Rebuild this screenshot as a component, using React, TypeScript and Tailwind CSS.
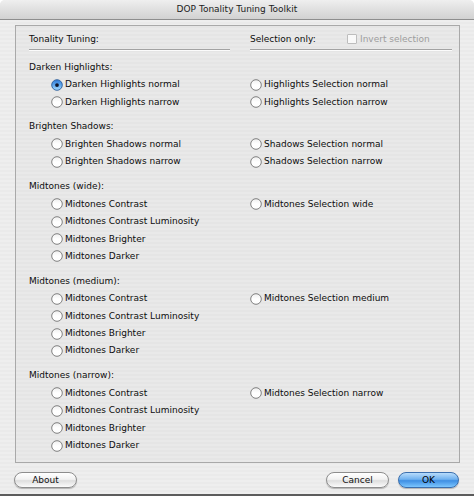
import React from 'react';

type Row = { left: string; right?: string; checked?: boolean };
type Group = { title: string; rows: Row[] };

const groups: Group[] = [
    {
        title: 'Darken Highlights:',
        rows: [
            { left: 'Darken Highlights normal', right: 'Highlights Selection normal', checked: true },
            { left: 'Darken Highlights narrow', right: 'Highlights Selection narrow' },
        ],
    },
    {
        title: 'Brighten Shadows:',
        rows: [
            { left: 'Brighten Shadows normal', right: 'Shadows Selection normal' },
            { left: 'Brighten Shadows narrow', right: 'Shadows Selection narrow' },
        ],
    },
    {
        title: 'Midtones (wide):',
        rows: [
            { left: 'Midtones Contrast', right: 'Midtones Selection wide' },
            { left: 'Midtones Contrast Luminosity' },
            { left: 'Midtones Brighter' },
            { left: 'Midtones Darker' },
        ],
    },
    {
        title: 'Midtones (medium):',
        rows: [
            { left: 'Midtones Contrast', right: 'Midtones Selection medium' },
            { left: 'Midtones Contrast Luminosity' },
            { left: 'Midtones Brighter' },
            { left: 'Midtones Darker' },
        ],
    },
    {
        title: 'Midtones (narrow):',
        rows: [
            { left: 'Midtones Contrast', right: 'Midtones Selection narrow' },
            { left: 'Midtones Contrast Luminosity' },
            { left: 'Midtones Brighter' },
            { left: 'Midtones Darker' },
        ],
    },
];

function Radio({ checked = false }: { checked?: boolean }) {
    return (
        <svg width="12" height="12" viewBox="0 0 12 12" className="shrink-0">
            <defs>
                <linearGradient id="radio-off" x1="0" y1="0" x2="0" y2="1">
                    <stop offset="0" stopColor="#eeeeee" />
                    <stop offset="0.5" stopColor="#ffffff" />
                    <stop offset="1" stopColor="#fdfdfd" />
                </linearGradient>
                <linearGradient id="radio-on" x1="0" y1="0" x2="0" y2="1">
                    <stop offset="0" stopColor="#2f79d6" />
                    <stop offset="0.5" stopColor="#5fa7ee" />
                    <stop offset="1" stopColor="#a8dcff" />
                </linearGradient>
            </defs>
            <circle
                cx="6"
                cy="6"
                r="5.3"
                fill={checked ? 'url(#radio-on)' : 'url(#radio-off)'}
                stroke={checked ? '#2a5d9c' : '#737373'}
                strokeWidth="0.9"
            />
            {checked && <circle cx="6" cy="6.1" r="1.9" fill="#10162a" />}
        </svg>
    );
}

function RadioItem({ label, checked }: { label: string; checked?: boolean }) {
    return (
        <div className="flex items-center gap-[2px] text-[#0d0d0d]">
            <Radio checked={checked} />
            <span>{label}</span>
        </div>
    );
}

function Separator() {
    return <div className="h-[2px] border-t border-t-[#a3a3a3] border-b border-b-[#fbfbfb]" />;
}

function AquaButton({ label, primary = false, width }: { label: string; primary?: boolean; width: string }) {
    const look = primary
        ? 'border-[#3b6fae] bg-[linear-gradient(180deg,#b8dcfb_0%,#6fb1ef_45%,#3f8fe3_55%,#7cc6ff_100%)] text-black'
        : 'border-[#8d8d8d] bg-[linear-gradient(180deg,#ffffff_0%,#f2f2f2_45%,#dedede_55%,#fbfbfb_100%)] text-[#111]';
    return (
        <button
            className={`${width} h-[16px] rounded-full border ${look} flex items-center justify-center text-[9px] leading-none shadow-[0_1px_1px_rgba(0,0,0,0.25)]`}
        >
            {label}
        </button>
    );
}

export default function App() {
    return (
        <div className="w-[474px] h-[500px] bg-white font-['DejaVu_Sans',sans-serif] text-[9px] leading-none overflow-hidden">
            <div className="h-[496px] flex flex-col rounded-t-[5px] overflow-hidden border-b-2 border-b-[#5c5c5c] bg-[repeating-linear-gradient(180deg,#eeeeee_0px,#eeeeee_2px,#eaeaea_2px,#eaeaea_4px)]">
                {/* title bar */}
                <div className="h-[20px] shrink-0 border-b border-b-[#8e8e8e] bg-[linear-gradient(180deg,#efefef_0%,#e0e0e0_50%,#d2d2d2_100%)] flex items-center justify-center text-[#1c1c1c]">
                    DOP Tonality Tuning Toolkit
                </div>

                {/* group box */}
                <div className="mt-[5px] ml-[15px] mr-[14px] h-[438px] border border-[#a9a9a9] bg-black/[0.02] pt-[4px] pl-[13px] pr-[7px]">
                    <div className="grid grid-cols-[201px_202px] gap-x-[20px]">
                        <div className="h-[18px] flex items-center text-[#0d0d0d]">Tonality Tuning:</div>
                        <div className="h-[18px] flex items-center">
                            <span className="w-[97px] text-[#0d0d0d]">Selection only:</span>
                            <span className="w-[10px] h-[10px] border border-[#bdbdbd] bg-[#f9f9f9] rounded-[1px]" />
                            <span className="ml-[3px] text-[#9d9d9d]">Invert selection</span>
                        </div>
                        <div className="mt-px"><Separator /></div>
                        <div className="mt-px"><Separator /></div>
                    </div>

                    <div className="mt-[7px] flex flex-col gap-[7px]">
                        {groups.map((group) => (
                            <div key={group.title} className="grid grid-cols-[201px_202px] gap-x-[20px]">
                                <div className="h-[18px] flex items-center text-[#0d0d0d]">{group.title}</div>
                                <div className="h-[18px]" />
                                {group.rows.map((row, index) => (
                                    <React.Fragment key={index}>
                                        <div className="h-[17.4px] flex items-center pl-[22px]">
                                            <RadioItem label={row.left} checked={row.checked} />
                                        </div>
                                        <div className="h-[17.4px] flex items-center">
                                            {row.right ? <RadioItem label={row.right} /> : null}
                                        </div>
                                    </React.Fragment>
                                ))}
                            </div>
                        ))}
                    </div>
                </div>

                {/* buttons */}
                <div className="mt-[9px] ml-[14px] mr-[15px] flex items-center">
                    <AquaButton label="About" width="w-[63px]" />
                    <div className="flex-1" />
                    <AquaButton label="Cancel" width="w-[63px]" />
                    <div className="w-[9px]" />
                    <AquaButton label="OK" primary width="w-[61px]" />
                </div>
            </div>
        </div>
    );
}
